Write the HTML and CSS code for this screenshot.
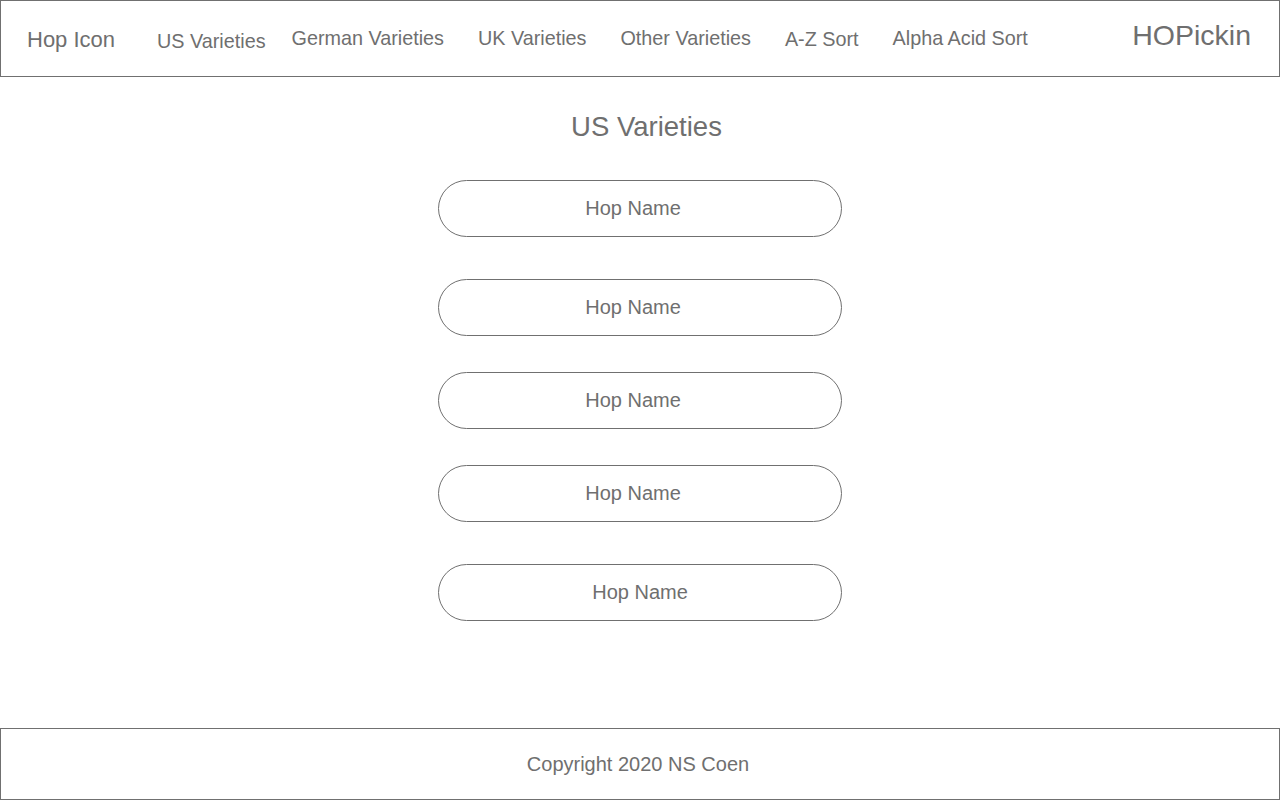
FILE: index.html
```html
<!DOCTYPE html>
<html lang="en">
<head>
  <meta charset="UTF-8">
  <title>HOPickin - US Varieties</title>
  <meta name="viewport" content="width=device-width, initial-scale=1">
  <link rel="stylesheet" href="styles.css">
</head>
<body>
  <!-- Top navigation -->
  <header class="site-header">
    <a class="home-link" href="#">Hop Icon</a>
    <nav class="nav">
      <a class="nav-link nav-low" href="#">US Varieties</a>
      <a class="nav-link nav-tight" href="#">German Varieties</a>
      <a class="nav-link" href="#">UK Varieties</a>
      <a class="nav-link" href="#">Other Varieties</a>
      <a class="nav-link nav-mid" href="#">A-Z Sort</a>
      <a class="nav-link" href="#">Alpha Acid Sort</a>
    </nav>
    <div class="brand">HOPickin</div>
  </header>

  <!-- Variety list -->
  <main class="content">
    <h1 class="page-title">US Varieties</h1>
    <div class="hop-list">
      <a class="hop-pill shift-left" href="#">Hop Name</a>
      <a class="hop-pill shift-left spaced" href="#">Hop Name</a>
      <a class="hop-pill shift-left" href="#">Hop Name</a>
      <a class="hop-pill shift-left" href="#">Hop Name</a>
      <a class="hop-pill spaced" href="#">Hop Name</a>
    </div>
  </main>

  <footer class="site-footer">Copyright 2020 NS Coen</footer>
</body>
</html>
```

FILE: styles.css
```css
:root {
  --ink: #6f6f6f;
  --line: #707070;
  --white: #fff;
}
* { box-sizing: border-box; }
body {
  font-family: 'Liberation Sans', Arial, sans-serif;
  color: var(--ink);
  background: var(--white);
  margin: 0;
  min-height: 100vh;
  display: flex;
  flex-direction: column;
}
a { color: inherit; text-decoration: none; }

/* Header */
.site-header {
  height: 77px;
  border: 1px solid var(--line);
  display: flex;
  align-items: flex-start;
  padding: 0 28px 0 26px;
}
.home-link {
  font-size: 22px;
  line-height: 1;
  margin-top: 28px;
  margin-right: 42px;
}
.nav {
  display: flex;
  align-items: flex-start;
  gap: 34px;
}
.nav-link {
  font-size: 19.8px;
  line-height: 1;
  margin-top: 28px;
}
.nav-low { margin-top: 31px; }
.nav-mid { margin-top: 29px; }
.nav-tight { margin-left: -8px; }
.brand {
  margin-left: auto;
  font-size: 28.5px;
  line-height: 1;
  margin-top: 20px;
}

/* Main list */
.content {
  flex: 1;
  display: flex;
  flex-direction: column;
  align-items: center;
}
.page-title {
  font-size: 27.5px;
  font-weight: normal;
  line-height: 1;
  margin: 36px 0 0 0;
  padding-left: 13px;
}
.hop-list {
  display: flex;
  flex-direction: column;
  gap: 36px;
  margin-top: 39px;
}
.hop-pill {
  width: 404px;
  height: 57px;
  border: 1px solid var(--line);
  border-radius: 29px;
  display: flex;
  align-items: center;
  justify-content: center;
  font-size: 20px;
}
.hop-pill.shift-left { padding-right: 14px; }
.hop-pill.spaced { margin-top: 6px; }

/* Footer */
.site-footer {
  height: 72px;
  border: 1px solid var(--line);
  display: flex;
  align-items: center;
  justify-content: center;
  font-size: 20px;
  padding-right: 4px;
}
```
